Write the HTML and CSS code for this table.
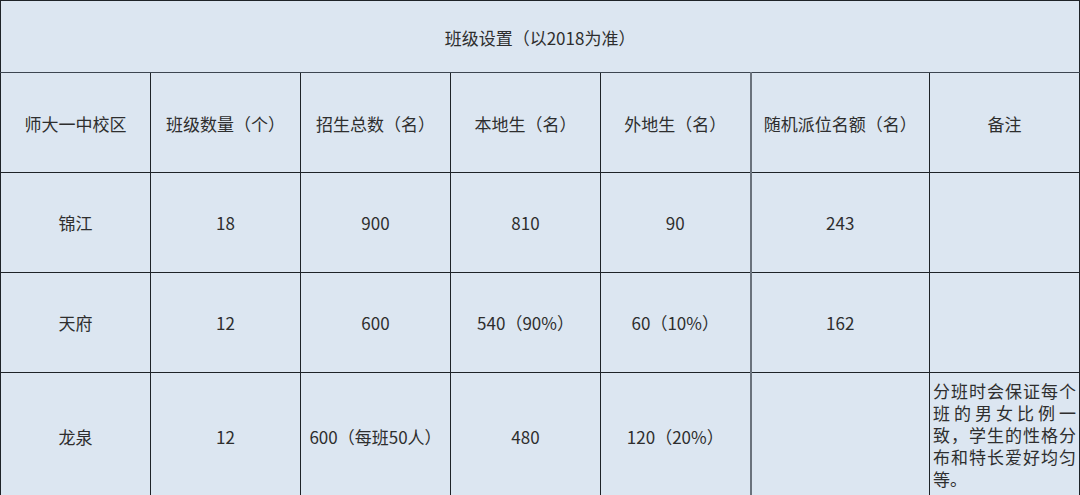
FILE: index.html
```html
<!DOCTYPE html>
<html lang="zh-CN">
<head>
<meta charset="utf-8">
<title>班级设置</title>
<link rel="stylesheet" href="styles.css">
</head>
<body>
<table class="grid">
  <colgroup>
    <col class="c1"><col class="c2"><col class="c3"><col class="c4"><col class="c5"><col class="c6"><col class="c7">
  </colgroup>
  <tr class="r-title"><td colspan="7">班级设置（以2018为准）</td></tr>
  <tr class="r-head">
    <td>师大一中校区</td>
    <td>班级数量（个）</td>
    <td>招生总数（名）</td>
    <td>本地生（名）</td>
    <td>外地生（名）</td>
    <td class="gray-left">随机派位名额（名）</td>
    <td>备注</td>
  </tr>
  <tr class="r-data">
    <td>锦江</td>
    <td>18</td>
    <td>900</td>
    <td>810</td>
    <td>90</td>
    <td class="gray-left">243</td>
    <td></td>
  </tr>
  <tr class="r-data">
    <td>天府</td>
    <td>12</td>
    <td>600</td>
    <td>540（90%）</td>
    <td>60（10%）</td>
    <td class="gray-left">162</td>
    <td></td>
  </tr>
  <tr class="r-last">
    <td>龙泉</td>
    <td>12</td>
    <td>600（每班50人）</td>
    <td>480</td>
    <td>120（20%）</td>
    <td class="gray-left"></td>
    <td class="note">分班时会保证每个班的男女比例一致，学生的性格分布和特长爱好均匀等。</td>
  </tr>
</table>
</body>
</html>
```

FILE: styles.css
```css
html, body {
  margin: 0;
  padding: 0;
  background: #dce6f1;
}
.grid {
  border-collapse: collapse;
  table-layout: fixed;
  width: 1080px;
  background: #dce6f1;
  font-family: "Noto Sans CJK SC", "Liberation Sans", sans-serif;
  font-size: 17px;
  line-height: 22px;
  color: #2e2e2e;
}
.c1, .c2, .c3, .c4, .c5, .c7 { width: 150px; }
.c6 { width: 179px; }
.grid td {
  border: 1px solid #1e2328;
  text-align: center;
  vertical-align: middle;
  padding: 0 1px;
  white-space: nowrap;
}
.r-title td {
  height: 68px;
  padding-top: 3px;
  border-bottom-color: #3c4550;
}
.r-head td {
  height: 96px;
  padding-top: 3px;
}
.r-data td { height: 99px; }
.r-last td { height: 121px; }
.r-last td:not(.note) { padding-top: 0; }
.grid td.gray-left {
  border-left: 2px solid #6a727c;
}
.grid td.note {
  white-space: normal;
  text-align: justify;
  text-align-last: left;
  vertical-align: top;
  padding: 7px 3px 0 3px;
  line-height: 22px;
}
```
